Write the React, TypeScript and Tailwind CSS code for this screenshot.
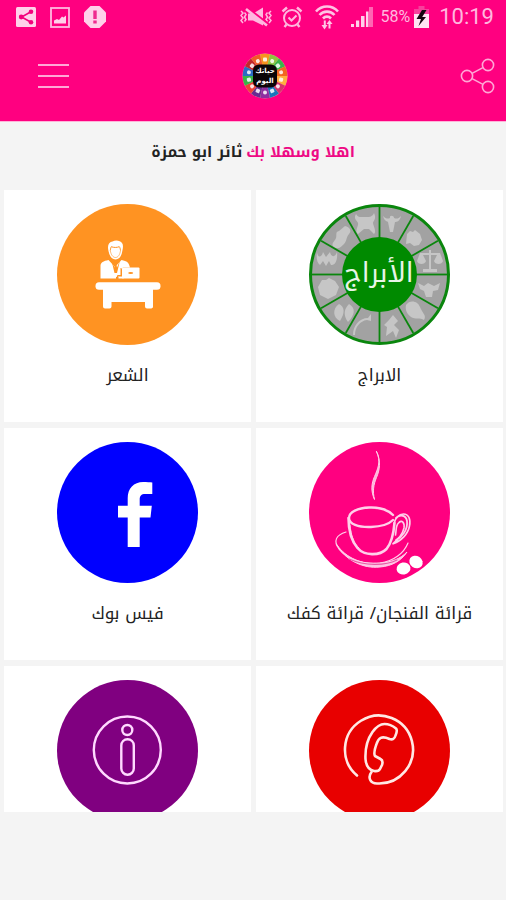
import type { ReactNode } from "react";

const arabic = "font-['Noto_Kufi_Arabic','Noto_Sans_Arabic','DejaVu_Sans',sans-serif]";

function ShareBadge() {
  return (
    <svg viewBox="0 0 20 20" className="h-5 w-5" aria-hidden="true">
      <rect width="20" height="20" rx="1.5" fill="#ffd0ea" />
      <path d="M15 4.8 5.6 10l9.4 5.2" fill="none" stroke="#f4007c" strokeWidth="1.6" />
      <circle cx="15" cy="4.8" r="2.3" fill="#f4007c" />
      <circle cx="5.2" cy="10" r="2.4" fill="#f4007c" />
      <circle cx="15" cy="15.2" r="2.3" fill="#f4007c" />
    </svg>
  );
}

function PictureBadge() {
  return (
    <svg viewBox="0 0 20 21" className="h-[21px] w-5" aria-hidden="true">
      <rect x="1" y="1" width="18" height="19" fill="none" stroke="#ffb8df" strokeWidth="1.8" />
      <path d="M4 16.500v-3l3-1.500 2 1 3-3.500 1.500 1L16 8.500v8z" fill="#ffd0ea" />
    </svg>
  );
}

function AlertBadge() {
  return (
    <svg viewBox="0 0 22 22" className="h-[22px] w-[22px]" aria-hidden="true">
      <path d="M6.500 0h9L22 6.500v9L15.500 22h-9L0 15.500v-9z" fill="#ffd0ea" />
      <path d="M9.300 4.500h3.400v8.500H9.300zM9.300 14.500h3.400v3H9.300z" fill="#ef2a8f" />
    </svg>
  );
}

function MuteIcon() {
  return (
    <svg viewBox="0 0 34 22" className="h-[22px] w-[34px]" fill="none" stroke="#ffb8df" aria-hidden="true">
      <path d="M2 5l2 2-2 2.500 2 2.500-2 2.500 2 2.500M5.500 6.500l1.500 2-1.500 2.500 1.500 2.500-1.500 2M32 5l-2 2 2 2.500-2 2.500 2 2.500-2 2.500M28.500 6.500l-1.500 2 1.500 2.500-1.500 2.500 1.500 2" strokeWidth="1.500" />
      <path d="M9 7.500h5L24 1.500v18L14 14.500H9z" fill="#ffb8df" stroke="none" />
      <path d="M7 1 28 17.500" stroke="#ff0080" strokeWidth="3" />
      <path d="M7 3 28 19.500" strokeWidth="2.600" />
    </svg>
  );
}

function AlarmIcon() {
  return (
    <svg viewBox="0 0 22 22" className="h-[22px] w-[22px]" fill="none" stroke="#ffb8df" strokeWidth="2" aria-hidden="true">
      <circle cx="11" cy="12" r="8" />
      <path d="M1.500 5.500 6 1.500M20.500 5.500 16 1.500M5.500 18.500 3.500 21M16.500 18.500l2 2.500" strokeWidth="2.400" />
      <path d="m7.500 11.500 3 3 5-5" />
    </svg>
  );
}

function WifiIcon() {
  return (
    <svg viewBox="0 0 24 26" className="h-[26px] w-6" fill="none" stroke="#ffc4e4" strokeWidth="2.600" aria-hidden="true">
      <path d="M1 7.500C7 .8 17 .8 23 7.500M4.500 11c4-4.500 11-4.500 15 0M8 14.500c2.300-2.500 5.700-2.500 8 0" />
      <path d="M9.800 16.500v6.500M14.500 24.500V18" strokeWidth="2" />
      <path d="M6.500 21h6l-3 4.500zM11.500 20h6l-3-4z" fill="#ffc4e4" stroke="none" />
    </svg>
  );
}

function SignalIcon() {
  return (
    <svg viewBox="0 0 22 20" className="h-5 w-[22px]" fill="#ffd0ea" aria-hidden="true">
      <path d="M0 17h3v3H0zM5 13.500h3.200V20H5zM10 9h3.500v11H10zM15 4.500h2.500V20H15z" />
      <path d="M18 0h4v20h-4z" fill="#ff66b3" />
    </svg>
  );
}

function BatteryIcon() {
  return (
    <svg viewBox="0 0 15 22" className="h-[22px] w-[15px]" aria-hidden="true">
      <path d="M4.500 0h6v3H15v6H0V3h4.500z" fill="#f7409c" />
      <path d="M0 8h15v14H0z" fill="#ffe3f3" />
      <path d="M8 4 2.500 13H7l-2.500 7L12 11H8.200L12.500 4z" fill="#140710" />
    </svg>
  );
}

function StatusBar() {
  return (
    <div className="flex h-9 items-center justify-between pl-4 pr-3 pb-[2px]" dir="ltr">
      <div className="flex items-center gap-[14px]">
        <ShareBadge />
        <PictureBadge />
        <AlertBadge />
      </div>
      <div className="flex items-center font-[Roboto,sans-serif] text-[#ffb8df]">
        <MuteIcon />
        <span className="ml-2"><AlarmIcon /></span>
        <span className="ml-3"><WifiIcon /></span>
        <span className="ml-3"><SignalIcon /></span>
        <span className="ml-2 text-base">58%</span>
        <span className="ml-1"><BatteryIcon /></span>
        <span className="ml-[10px] text-[22px] leading-8">10:19</span>
      </div>
    </div>
  );
}

const wheel = ["#f7941d", "#8dc63f", "#39b54a", "#f26522", "#ffb03f", "#d6336c", "#1b75bc", "#8e2fa0", "#662d91", "#ef4136", "#39b54a", "#2b6cc4", "#c1272d", "#f15a29"];

function Logo() {
  return (
    <svg viewBox="0 0 46 46" className="h-[46px] w-[46px] font-['DejaVu_Sans',sans-serif]" role="img" aria-label="حياتك اليوم">
      <circle cx="23" cy="23" r="22.500" fill="#e9a9a0" />
      {wheel.map((color, i) => (
        <g key={i} transform={`rotate(${(i * 360) / wheel.length} 23 23)`}>
          <path d="M23 23 18.100 1.200a22 22 0 0 1 9.800 0z" fill={color} />
          <rect x="21" y="4.500" width="4" height="4" rx={i % 2 ? 2 : 1} fill="#fff" opacity=".85" />
        </g>
      ))}
      <rect x="11" y="11.500" width="24" height="23" rx="6" fill="#0b0508" />
      <text x="23" y="20" textAnchor="middle" fill="#fff" fontSize="7" fontWeight="700">حياتك</text>
      <text x="23" y="30" textAnchor="middle" fill="#fff" fontSize="7" fontWeight="700">اليوم</text>
    </svg>
  );
}

function Header() {
  return (
    <header className="h-[122px] shrink-0 border-b border-[#ffb3d9] bg-[#ff0080]">
      <StatusBar />
      <div className="flex h-20 items-center justify-between pl-[37px] pr-[10px]" dir="ltr">
        <button type="button" aria-label="القائمة">
          <svg viewBox="0 0 32 26" className="h-[26px] w-8" stroke="#ffa8d6" strokeWidth="2" aria-hidden="true">
            <path d="M1 2h31M1 13h31M1 24h31" />
          </svg>
        </button>
        <Logo />
        <button type="button" aria-label="مشاركة">
          <svg viewBox="0 0 36 36" className="h-9 w-9" fill="none" stroke="#ffa8d6" strokeWidth="1.600" aria-hidden="true">
            <circle cx="28" cy="7" r="5.600" />
            <circle cx="7" cy="18" r="5.600" />
            <circle cx="28" cy="29" r="5.600" />
            <path d="M12 15.400 23 9.600M12 20.600l11 5.800" />
          </svg>
        </button>
      </div>
    </header>
  );
}

// twelve small sign figures, drawn near the rim of the zodiac wheel
const signs = [
  { x: 83, y: 18, d: "M-9-6c3 3 5 3 7 2-1-3 4-3 4 0 3 1 4 1 7-2-1 5-4 6-6 6l-2 10h-3L-4 0c-2-1-4-2-5-6z" },
  { x: 105, y: 34, d: "M-7-4l3-3 3 1 2-2 5 4 2 6-3 5-5 1-4-3-4 1z" },
  { x: 121, y: 58, d: "M-1-12h2v3h9l3 8c-1 4-8 4-9 0l3-6H1v14h6v3H-7v-3h6V-7h-6l3 6c-1 4-8 4-9 0l3-8h9z" },
  { x: 120, y: 85, d: "M-11-6l6 3 4-3 6 3 6-3-2 7-5 1-1 6h-6l-2-6-4-2z" },
  { x: 106, y: 107, d: "M-9-6c4-6 12-4 14 2s7 8 4 13c-4-3-9 0-13-3s-6-7-5-12z" },
  { x: 83, y: 122, d: "M1-11 6-5 2-1l5 5-3 8-3-7-7 5 1-9-3-2 5-5z" },
  { x: 57, y: 122, d: "M-13 9c0-9 6-17 15-17l3-4 0 7-4-1C-6-5-11 1-11 9z" },
  { x: 34, y: 109, d: "M-4-9c6 3 6 9 1 17-7-3-8-12-1-17zM6-9c7 4 6 11-1 18-5-7-4-13 1-18z" },
  { x: 20, y: 84, d: "M-7-8h4l3-2 6 3 4 6-3 8-8 4-8-4-2-8z" },
  { x: 18, y: 56, d: "M-10-8c1 7 5 5 6 0l3 5 4-5c1 5 5 6 7 0 1 8-2 14-6 13l-2-4-3 5-3-5-3 4c-3-2-4-7-3-13z" },
  { x: 34, y: 34, d: "M2-12c5 1 7 5 4 8s-2 7-5 10-6 6-10 3 1-6 2-9-1-6 3-7z" },
  { x: 57, y: 18, d: "M-10-8c2 4 5 3 8 3s8 1 10-4c3 6-1 8-1 10s4 9 1 11l-5-5h-5l-6 5c-4-3 1-8 0-11s-5-4-2-9z" },
];

function ZodiacArt() {
  return (
    <>
      <circle cx="70.500" cy="70.500" r="69" fill="#a2a2a2" stroke="#0a860d" strokeWidth="3" />
      {signs.map((sign) => (
        <path key={sign.d} d={sign.d} fill="#c6c6c6" transform={`translate(${sign.x} ${sign.y})`} />
      ))}
      {signs.map((sign, i) => (
        <path key={sign.d} d="M70.500 34V3" stroke="#0a860d" strokeWidth="1.800" transform={`rotate(${i * 30} 70.500 70.500)`} />
      ))}
      <circle cx="70.500" cy="70.500" r="37.500" fill="#008a00" />
      <text x="70" y="78" textAnchor="middle" fill="#e8f5e8" fontSize="27" className={arabic}>الأبراج</text>
    </>
  );
}

function DeskArt() {
  return (
    <>
      <circle cx="70.500" cy="70.500" r="70.500" fill="#ff9322" />
      <path d="M51.500 47c-1.500-6 .5-9 4-9.500 3-1.800 8-1 9.500 1.500 1.500 2 1 5 .3 8-.7 5-3 8.500-6.800 8.500s-6-3.500-7-8.500z" fill="#fff" />
      <path d="M53.300 46.500c.3-2 .5-3 1-3.800 2.500 1 5.500 1 8 0 .6.800 1 2 1.200 3.800" fill="none" stroke="#ff9322" strokeWidth="1" />
      <path d="M53.300 46.500c.6 4 2.500 7 5.200 7s4.500-3 5-7" fill="none" stroke="#ff9322" strokeWidth=".6" />
      <path d="M43.500 74.500V62c0-3.500 3-5 8-6l6.500 7 6.500-7c4 .8 6.500 2 7.500 4.500l1 3H66l-2 2v6l-5 1.500v1.500z" fill="#fff" />
      <path d="m54.500 56.500 3 7 .8-4-.8-2h2.500l-.8 2 .8 4 3-7-3 12.500h-2.500z" fill="#ff9322" />
      <path d="M64 64v7.500h-3.500v3" fill="none" stroke="#ff9322" strokeWidth="1" />
      <rect x="65" y="63.500" width="17.500" height="11" rx="1" fill="#fff" />
      <path d="M61.500 72.500h5v2h-5z" fill="#fff" />
      <ellipse cx="73.700" cy="69" rx="2.500" ry="1" fill="#ff9322" />
      <rect x="38.500" y="78.300" width="65" height="7.500" rx="3.500" fill="#fff" />
      <path d="M46 84h50v18a2 2 0 0 1-2 2.500h-4a2 2 0 0 1-2-2V98H54.500v4.500a2 2 0 0 1-2 2H48a2 2 0 0 1-2-2z" fill="#fff" />
    </>
  );
}

function CoffeeArt() {
  return (
    <>
      <circle cx="70.500" cy="70.500" r="70.500" fill="#ff0080" />
      <g fill="none" stroke="#ffd0ea" strokeLinecap="round">
        <path d="M67.500 9.500c5 10 1 18-2 25s-4 14 0 23c-2-8-1-15 2-22s5-16 0-26z" strokeWidth="1" fill="#ffb3da" />
        <path d="M84 73c-5-5-13-8-24-7.500s-20 4.500-20 10.500 9 9.500 22 9c11-.5 18-3 22-7" strokeWidth="2.400" />
        <path d="M39.500 76c0 13 3 23 9 30 7 8 22 8 29 1 5-6 7-14 8-26" strokeWidth="2.600" />
        <path d="M41 83c1 11 4 19 9 23" strokeWidth="1" />
        <path d="M85 82c1-6 5-10 9.500-10 5 0 7.500 5 6 12-1.500 8-8 15-17 18 5-4 10-9 11.500-16 .8-5-2-9-5.500-5-3 3-2 7-3 12" strokeWidth="1.600" />
        <path d="M87 76c4-4 10-3 11 3 1 9-5 16-11 19" strokeWidth="1.800" />
        <path d="M37 90c-10 3-13 9-7 17 9 11 24 16 41 14 14-2 24-10 28-20" strokeWidth="1.200" />
        <path d="M28 103c8 15 26 24 43 22 12-1 21-6 27-15-7 7-15 10-27 11-18 2-34-5-43-18z" strokeWidth="1" fill="#ffc4e4" />
        <path d="M40 117c16 7 36 7 48 1" stroke="#e85aa6" strokeWidth="1.200" />
      </g>
      <g fill="#fff">
        <ellipse cx="94.500" cy="126.500" rx="7" ry="6" transform="rotate(-10 94.500 126.500)" />
        <ellipse cx="107" cy="120" rx="7" ry="6" transform="rotate(35 107 120)" />
      </g>
    </>
  );
}

function FacebookArt() {
  return (
    <>
      <circle cx="70.500" cy="70.500" r="70.500" fill="#0000ff" />
      <path d="M95.300 40.500v11.500h-7c-4.200 0-5.600 2-5.600 5.500v6.300h12.100l-1.300 11.600H82.700V105h-12V75.400H61V63.800h9.700v-7.500c0-10 6-16.300 15.500-16.300 3.600 0 6.800.2 9.100.5z" fill="#fff" />
    </>
  );
}

function InfoArt() {
  return (
    <>
      <circle cx="70.500" cy="70.500" r="70.500" fill="#800080" />
      <g fill="none" stroke="#ffd9ff" strokeWidth="2.400">
        <circle cx="70.300" cy="70" r="33.500" />
        <circle cx="70.300" cy="50" r="5" />
        <rect x="64.300" y="59.200" width="12.500" height="35.500" rx="6.200" />
      </g>
    </>
  );
}

function PhoneArt() {
  return (
    <>
      <circle cx="70.500" cy="70.500" r="70.500" fill="#e80000" />
      <g fill="none" stroke="#ffe8e4" strokeWidth="2.600" strokeLinecap="round" strokeLinejoin="round">
        <path d="M48 95.500A34 34 0 1 1 68 103.500c-7-.3-9.500-6-5.500-11.500" />
        <path d="M56.500 79c-.5-11 2-20 7-27 4-5.500 8-8 12-8 5 0 8.500 2 11.500 4.500 1.500 1.500.8 4-.5 7-1 3.500-3 4.500-6 3.500-8-3.500-11-1-13 5-2 5.500-3 9.500-1.500 12l5.500 3c2 1 2.500 3 1.500 6l-2 4c-1 2-3 2.500-6 2-5-1-8-6-8.500-12z" />
      </g>
    </>
  );
}

type Tile = { name: string; art: ReactNode; caption?: boolean };

const tiles: Tile[] = [
  { name: "الابراج", art: <ZodiacArt />, caption: true },
  { name: "الشعر", art: <DeskArt />, caption: true },
  { name: "قرائة الفنجان/ قرائة كفك", art: <CoffeeArt />, caption: true },
  { name: "فيس بوك", art: <FacebookArt />, caption: true },
  { name: "اتصل بنا", art: <PhoneArt /> },
  { name: "معلومات", art: <InfoArt /> },
];

export default function App() {
  return (
    <div dir="rtl" className={`flex h-screen flex-col bg-[#f4f4f4] text-[#222] ${arabic}`}>
      <Header />
      <main className="min-h-0 flex-1 overflow-y-auto [scrollbar-width:none]">
        <h1 className="flex h-[68px] items-center justify-center gap-1 pb-2 text-[15px] leading-7 font-bold">
          <span className="text-[#ee0a85]">اهلا وسهلا بك</span>
          <span>ثائر ابو حمزة</span>
        </h1>
        <nav className="grid grid-cols-2 gap-x-[5px] gap-y-[6px] pl-1 pr-[3px]">
          {tiles.map((tile) => (
            <a
              key={tile.name}
              href="#"
              aria-label={tile.name}
              className="flex h-[232px] flex-col items-center bg-white pt-[14px]"
            >
              <svg viewBox="0 0 141 141" className="h-[141px] w-[141px]" aria-hidden="true">{tile.art}</svg>
              {tile.caption && <span className="mt-4 text-[17px] leading-7">{tile.name}</span>}
            </a>
          ))}
        </nav>
      </main>
      <footer className="h-[88px] shrink-0" />
    </div>
  );
}
